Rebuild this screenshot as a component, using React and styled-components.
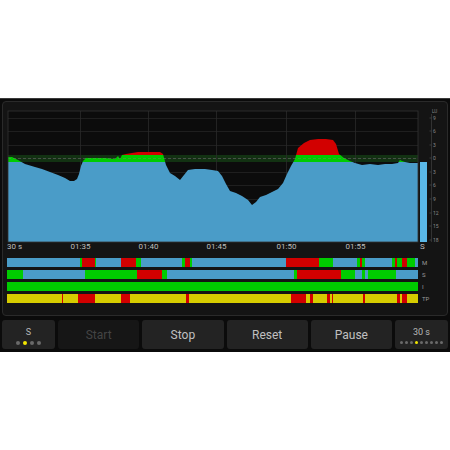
import React from "react";
import styled, { createGlobalStyle } from "styled-components";

const GlobalStyle = createGlobalStyle`
  body {
    margin: 0;
    background: #ffffff;
    font-family: Roboto, "Liberation Sans", sans-serif;
  }
`;

const Screen = styled.div`
  margin-top: 98px;
  height: 254px;
  box-sizing: border-box;
  background: #0b0b0b;
  border-top: 1px solid #3a3a3a;
  padding: 2px 2px 0;
  display: flex;
  flex-direction: column;
  gap: 4px;
`;

const Panel = styled.div`
  height: 215px;
  box-sizing: border-box;
  background: #141414;
  border: 1px solid #2a2a2a;
  border-radius: 4px;
  overflow: hidden;
`;

const Chart = styled.svg`
  display: block;
  width: 443px;
  height: 150px;
`;

const Bars = styled.div`
  display: flex;
  flex-direction: column;
  gap: 3px;
  margin-top: 6px;
  padding-left: 4px;
`;

const BarRow = styled.div`
  display: flex;
  align-items: center;
  height: 9px;
`;

const Bar = styled.div`
  width: 411px;
  height: 100%;
  display: flex;
  overflow: hidden;
`;

const Segment = styled.div`
  height: 100%;
  background: ${(p) => p.$color};
`;

const BarLabel = styled.span`
  margin-left: 4px;
  font-size: 6px;
  color: #9a9a9a;
`;

const Keys = styled.div`
  display: flex;
  gap: 3px;
  height: 29px;
`;

const Key = styled.div`
  flex: ${(p) => (p.$small ? "0 0 53px" : "1")};
  display: flex;
  flex-direction: column;
  align-items: center;
  justify-content: center;
  gap: ${(p) => (p.$small ? "4px" : "0")};
  background: ${(p) => (p.$disabled ? "#161616" : "#232323")};
  border-radius: 3px;
  color: ${(p) => (p.$disabled ? "#444" : p.$small ? "#b8b8b8" : "#c0c0c0")};
  font-size: ${(p) => (p.$small ? "9px" : "12px")};
  line-height: 1;
  padding-top: ${(p) => (p.$small ? "3px" : "0")};
  box-sizing: border-box;
`;

const Dots = styled.div`
  display: flex;
  gap: ${(p) => p.$gap}px;
`;

const Dot = styled.span`
  width: ${(p) => p.$size}px;
  height: ${(p) => p.$size}px;
  border-radius: 50%;
  background: ${(p) => (p.$active ? "#f2e600" : "#6a6a6a")};
`;

const C = {
  b: "#4a9cc8",
  g: "#00cc00",
  r: "#d20000",
  y: "#d6cc00",
};

// segments as [colour, endX] in page pixels, bar runs from x=7 to x=418
const rows = [
  {
    label: "M",
    segs: [
      ["b", 80], ["g", 82], ["r", 95], ["g", 96], ["b", 121], ["r", 136],
      ["g", 141], ["b", 182], ["g", 185], ["r", 190], ["g", 192], ["b", 286],
      ["r", 319], ["g", 333], ["b", 357], ["g", 360], ["r", 362], ["g", 365],
      ["b", 392], ["g", 395], ["r", 397], ["g", 402], ["r", 407], ["g", 415],
      ["b", 418],
    ],
  },
  {
    label: "S",
    segs: [
      ["g", 23], ["b", 85], ["g", 137], ["r", 162], ["g", 167], ["b", 294],
      ["g", 297], ["r", 341], ["g", 355], ["b", 362], ["g", 365], ["b", 368],
      ["g", 396], ["b", 418],
    ],
  },
  { label: "I", segs: [["g", 418]] },
  {
    label: "TP",
    segs: [
      ["y", 62], ["r", 63], ["y", 78], ["r", 95], ["y", 121], ["r", 130],
      ["y", 186], ["r", 189], ["y", 291], ["r", 306], ["y", 310], ["r", 313],
      ["y", 327], ["r", 330], ["y", 332], ["r", 333], ["y", 363], ["r", 365],
      ["y", 397], ["r", 400], ["y", 402], ["r", 407], ["y", 418],
    ],
  },
];

const curve = [
  [8, 157], [12, 157], [18, 160], [25, 164], [35, 167], [42, 169], [50, 172],
  [58, 175], [65, 178], [70, 181], [74, 181], [77, 179], [79, 174], [81, 166],
  [83, 161], [86, 158], [95, 158], [105, 158], [115, 159], [118, 156],
  [120, 159], [122, 155], [126, 154], [132, 153], [138, 152], [150, 152],
  [160, 152], [163, 154], [166, 165], [170, 173], [175, 176], [180, 180],
  [184, 175], [188, 170], [195, 169], [205, 169], [212, 170], [218, 171],
  [222, 176], [226, 184], [230, 191], [236, 193], [242, 196], [248, 200],
  [252, 205], [256, 202], [260, 197], [266, 195], [272, 192], [278, 189],
  [283, 183], [287, 174], [291, 166], [295, 159], [298, 148], [304, 143],
  [310, 140], [318, 139], [326, 139], [333, 140], [336, 144], [339, 154],
  [344, 158], [350, 161], [355, 163], [362, 165], [370, 164], [378, 165],
  [385, 164], [392, 164], [398, 163], [400, 160], [402, 161], [405, 162],
  [410, 163], [418, 163],
];

const area =
  "M8,242 " + curve.map(([x, y]) => `L${x},${y}`).join(" ") + " L418,242 Z";

const scale = [
  ["9", 118], ["6", 131], ["3", 145], ["0", 158], ["3", 172], ["6", 185],
  ["9", 199], ["12", 213], ["15", 226], ["18", 240],
];

const times = [
  ["01:35", 80.5], ["01:40", 148.5], ["01:45", 216.5], ["01:50", 286.5],
  ["01:55", 355.5],
];

function LoudnessChart() {
  return (
    <Chart viewBox="3 102 443 150">
      <defs>
        <clipPath id="clipBlue">
          <rect x="0" y="162" width="450" height="100" />
        </clipPath>
        <clipPath id="clipGreen">
          <rect x="0" y="155" width="450" height="7" />
        </clipPath>
        <clipPath id="clipRed">
          <rect x="0" y="100" width="450" height="55" />
        </clipPath>
      </defs>
      <rect x="8" y="111" width="410" height="131" fill="#0c0c0c" />
      <rect x="8" y="155" width="410" height="7" fill="#123212" />
      {scale.map(([, y]) => (
        <line key={y} x1="8" x2="418" y1={y + 0.5} y2={y + 0.5} stroke="#242424" strokeWidth="0.8" />
      ))}
      {times.map(([, x]) => (
        <line key={x} x1={x} x2={x} y1="111" y2="242" stroke="#2a2a2a" strokeWidth="0.8" />
      ))}
      <path d={area} fill={C.r} clipPath="url(#clipRed)" />
      <path d={area} fill={C.g} clipPath="url(#clipGreen)" />
      <path d={area} fill={C.b} clipPath="url(#clipBlue)" />
      <line x1="8" x2="418" y1="158.5" y2="158.5" stroke="#6b8a6b" strokeWidth="0.7" strokeDasharray="3 2" opacity="0.7" />
      <rect x="8" y="111" width="410" height="131" fill="none" stroke="#333" strokeWidth="0.8" />
      <rect x="420" y="162" width="7" height="80" fill="#5ab8e8" />
      <line x1="431.5" x2="431.5" y1="114" y2="242" stroke="#3a3a3a" strokeWidth="0.8" />
      {scale.map(([v, y]) => (
        <g key={"s" + y}>
          <line x1="429.5" x2="431.5" y1={y} y2={y} stroke="#555" strokeWidth="0.6" />
          <text x="433" y={y + 1.8} fontSize="5" fill="#8a8a8a" fontFamily="Roboto, sans-serif">
            {v}
          </text>
        </g>
      ))}
      <text x="432" y="112.5" fontSize="4.5" fill="#8a8a8a" fontFamily="Roboto, sans-serif">
        LU
      </text>
      <text x="7" y="249" fontSize="8" fill="#bdbdbd" fontFamily="Roboto, sans-serif">
        30 s
      </text>
      {times.map(([t, x]) => (
        <text key={t} x={x} y="249" fontSize="8" fill="#bdbdbd" textAnchor="middle" fontFamily="Roboto, sans-serif">
          {t}
        </text>
      ))}
      <text x="420" y="249" fontSize="8" fill="#bdbdbd" fontFamily="Roboto, sans-serif">
        S
      </text>
    </Chart>
  );
}

function ColourBar({ segs }) {
  let start = 7;
  return (
    <Bar>
      {segs.map(([c, end], i) => {
        const w = end - start;
        start = end;
        return <Segment key={i} $color={C[c]} style={{ width: w }} />;
      })}
    </Bar>
  );
}

function DotRow({ count, active, size, gap }) {
  return (
    <Dots $gap={gap}>
      {Array.from({ length: count }, (_, i) => (
        <Dot key={i} $size={size} $active={i === active} />
      ))}
    </Dots>
  );
}

export default function App() {
  return (
    <>
      <GlobalStyle />
      <Screen>
        <Panel>
          <LoudnessChart />
          <Bars>
            {rows.map((r) => (
              <BarRow key={r.label}>
                <ColourBar segs={r.segs} />
                <BarLabel>{r.label}</BarLabel>
              </BarRow>
            ))}
          </Bars>
        </Panel>
        <Keys>
          <Key $small>
            S
            <DotRow count={4} active={1} size={4} gap={3} />
          </Key>
          <Key $disabled>Start</Key>
          <Key>Stop</Key>
          <Key>Reset</Key>
          <Key>Pause</Key>
          <Key $small>
            30 s
            <DotRow count={9} active={3} size={3} gap={2} />
          </Key>
        </Keys>
      </Screen>
    </>
  );
}
